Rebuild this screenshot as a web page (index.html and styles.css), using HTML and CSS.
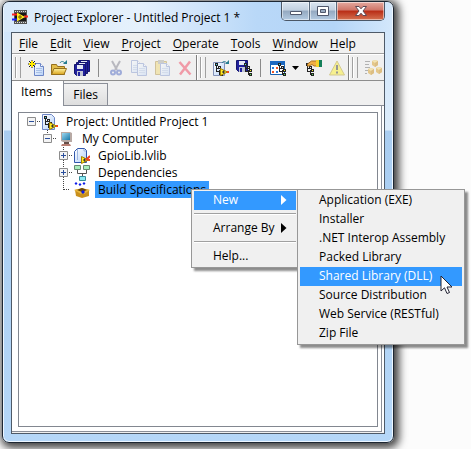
FILE: index.html
```html
<!DOCTYPE html>
<html lang="en">
<head>
<meta charset="utf-8">
<meta name="viewport" content="width=device-width">
<title>Project Explorer - Untitled Project 1 *</title>
<link rel="stylesheet" href="styles.css">
</head>
<body>
<svg class="defs" aria-hidden="true">
  <defs>
    <linearGradient id="paper" x2="1" y2="1"><stop stop-color="#fff"/><stop offset="1" stop-color="#b4d0f8"/></linearGradient>
    <linearGradient id="gold" x2="0" y2="1"><stop stop-color="#fff3a0"/><stop offset="1" stop-color="#d9a21c"/></linearGradient>
    <linearGradient id="screen" x2="1" y2="1"><stop stop-color="#9ed8f0"/><stop offset="1" stop-color="#1878a8"/></linearGradient>
    <g id="nodes" shape-rendering="crispEdges">
      <path d="M1 3h1v6H1zM2 5h1v1H2zM2 8h3v1H2zM4 7h1v5H4z" fill="#222"/>
      <path d="M0 0h3v3H0zM3 3h3v3H3zM5 6h3v3H5zM5 10h3v3H5z" fill="#222"/>
      <path d="M1 1h1v1H1z" fill="#45d4e8"/><path d="M4 4h1v1H4z" fill="#ddd"/>
      <path d="M6 7h1v1H6z" fill="#f2e52c"/><path d="M6 11h1v1H6z" fill="#58d858"/>
    </g>
    <g id="sheet">
      <path d="M.5.5h6l3 3v9h-9z" fill="url(#paper)" stroke="#6d86c6"/>
      <path d="M6.500.5v3h3" fill="#fff" stroke="#6d86c6"/>
      <path d="M2 5.500h6M2 7.500h6M2 9.500h6" stroke="#a9c0e6"/>
    </g>
    <g id="disk">
      <path d="M.5.5h11v11h-9l-2-2z" fill="#20209c" stroke="#14146c"/>
      <path d="M3 1h6v4H3z" fill="#e4e8f4"/><path d="M3 7h6v5H3z" fill="#bfc4d4"/><path d="M4 8h2v4H4z" fill="#20209c"/>
    </g>
    <g id="badge"><path d="M.5.5l7 3.500-7 3.500z" fill="#ffeb25" stroke="#a78300"/><path d="M2 4h3M3.500 2.500v3" stroke="#333"/><path d="M7 4h2" stroke="#f34b1b" stroke-width="2"/></g>
    <g id="cube"><path d="M3 0l3 1v4L3 7 0 5V1z" fill="#dfb75f"/><path d="M3 0l3 1-3 2-3-2z" fill="#f5df9a"/><path d="M3 3v4l3-2V1z" fill="#d4a956"/></g>
  </defs>
</svg>

<main class="window">
  <header class="titlebar">
    <svg class="app-icon" width="16" height="16" viewBox="0 0 16 16" aria-hidden="true">
      <path d="M2 1h13v14H2z" fill="#555"/><path d="M3 2.500h12M3 13.500h12" stroke="#ddd" stroke-dasharray="1 1"/>
      <path d="M3 4h11v8H3z" fill="#161616"/>
      <path d="M0 5.500h5" stroke="#f22" stroke-width="2"/><path d="M0 10.500h5" stroke="#22f" stroke-width="2"/><path d="M12 7.500h4" stroke="#f22" stroke-width="2"/>
      <path d="M5 3.500l8 4.500-8 4.500z" fill="#ffec22"/><path d="M6 8h4M8 6v4" stroke="#715700"/>
    </svg>
    <h1>Project Explorer - Untitled Project 1 *</h1>
    <div class="caption">
      <button type="button" class="cap min" aria-label="Minimize"><svg width="14" height="12" viewBox="0 0 14 12"><path d="M1.500 6.500h11v3h-11z" fill="#fff" stroke="#50586c"/></svg></button>
      <button type="button" class="cap max" aria-label="Maximize"><svg width="14" height="12" viewBox="0 0 14 12"><path d="M1.500 1.500h11v9h-11z" fill="#fff" stroke="#50586c"/><path d="M4.500 4.500h5v3h-5z" fill="#99abc0" stroke="#50586c"/></svg></button>
      <button type="button" class="cap close" aria-label="Close"><svg width="14" height="12" viewBox="0 0 14 12"><path d="M1.500 1.500h3.500L7 3.800l2-2.300h3.500L9 6l3.500 4.500H9L7 8.200l-2 2.300H1.500L5 6z" fill="#fff" stroke="#5e4a55"/></svg></button>
    </div>
  </header>

  <div class="client">
    <nav class="menubar" aria-label="Main menu">
      <button type="button"><u>F</u>ile</button>
      <button type="button"><u>E</u>dit</button>
      <button type="button"><u>V</u>iew</button>
      <button type="button"><u>P</u>roject</button>
      <button type="button"><u>O</u>perate</button>
      <button type="button"><u>T</u>ools</button>
      <button type="button"><u>W</u>indow</button>
      <button type="button"><u>H</u>elp</button>
    </nav>

    <div class="toolbar" role="toolbar" aria-label="Project tools">
      <div class="band">
        <span class="grip"></span>
        <button type="button" aria-label="New"><svg width="16" height="16" viewBox="0 0 16 16"><use href="#sheet" x="6" y="3"/><path d="M4 0v8M0 4h8M1 1l6 6M7 1L1 7" stroke="#222"/><path d="M4 1v6M1 4h6" stroke="#ffe900" stroke-width="2"/></svg></button>
        <button type="button" aria-label="Open"><svg width="16" height="16" viewBox="0 0 16 16"><path d="M.5 14.500v-10h5l1 2h7v8z" fill="#e3bd4a" stroke="#96701c"/><path d="M3 8.500h12.500l-2.500 6H.5z" fill="url(#gold)" stroke="#96701c"/><path d="M9 3c1-2 3-2 5 0" fill="none" stroke="#257d91"/><path d="M12 4h4V0z" fill="#257d91"/></svg></button>
        <button type="button" aria-label="Save all"><svg width="16" height="16" viewBox="0 0 16 16"><use href="#disk" x="4" y="0"/><use href="#disk" x="2" y="2"/><use href="#disk" x="0" y="4"/></svg></button>
        <span class="divider"></span>
        <button type="button" class="off" aria-label="Cut" disabled><svg width="16" height="16" viewBox="0 0 16 16"><path d="M4 1l5 9M12 1l-5 9" stroke="#667" stroke-width="2"/><circle cx="5" cy="12.500" r="2" fill="none" stroke="#2848b8" stroke-width="2"/><circle cx="11" cy="12.500" r="2" fill="none" stroke="#2848b8" stroke-width="2"/></svg></button>
        <button type="button" class="off" aria-label="Copy" disabled><svg width="16" height="16" viewBox="0 0 16 16"><use href="#sheet"/><use href="#sheet" x="6" y="3"/></svg></button>
        <button type="button" class="off" aria-label="Paste" disabled><svg width="16" height="16" viewBox="0 0 16 16"><path d="M1.500 1.500h11v13h-11z" fill="#f1d45a" stroke="#a5801f"/><path d="M4 0h6v4H4z" fill="#9a9a90"/><use href="#sheet" x="6" y="3"/></svg></button>
        <button type="button" class="off" aria-label="Delete" disabled><svg width="16" height="16" viewBox="0 0 16 16"><path d="M2.500 2l11 12.500M13 1.500L3 14.500" stroke="#f01c3c" stroke-width="2.500"/></svg></button>
      </div>
      <div class="band">
        <span class="grip"></span>
        <button type="button" aria-label="Open project"><svg width="16" height="16" viewBox="0 0 16 16"><path d="M.5 2.500h11v13H.5z" fill="url(#paper)" stroke="#8291b8"/><use href="#nodes" x="2" y="3"/><path d="M9 3c1-2 3-2 5 0" fill="none" stroke="#257d91"/><path d="M12 4h4V0z" fill="#257d91"/><use href="#badge" x="7" y="8"/></svg></button>
        <button type="button" aria-label="Save project"><svg width="16" height="16" viewBox="0 0 16 16"><use href="#disk"/><use href="#nodes" x="8" y="3"/></svg></button>
        <span class="divider"></span>
        <button type="button" class="view" aria-label="View options"><svg width="16" height="16" viewBox="0 0 16 16"><path d="M.5 1.500h14v13H.5z" fill="#fff" stroke="#1760ae"/><path d="M0 1h15v4H0z" fill="#1c68c0"/><path d="M2 7h2v2H2zM6 11h2v2H6z" fill="#2d7ddb"/><path d="M6 7h2v2H6zM2 11h2v2H2z" fill="#ef5525"/><use href="#nodes" x="8" y="3"/></svg><svg class="drop" width="7" height="4" viewBox="0 0 7 4"><path d="M0 0h7L3.500 4z"/></svg></button>
        <button type="button" aria-label="Project properties"><svg width="16" height="16" viewBox="0 0 16 16"><use href="#nodes" y="3"/><path d="M1.500 4l4-3h5v5H8L6 4.500 3 6H1.500z" fill="#efae47" stroke="#a9701f"/><path d="M10 0h3v7h-3z" fill="#f3d12d"/><path d="M13 0h3v7h-3z" fill="#15805a"/></svg></button>
        <button type="button" class="off" aria-label="Resolve conflicts" disabled><svg width="16" height="16" viewBox="0 0 16 16"><path d="M8 1l7.500 14H.5z" fill="#fff000" stroke="#ab9100"/><path d="M8 5v5M8 11.500v2" stroke="#111" stroke-width="2"/></svg></button>
      </div>
      <div class="band last">
        <span class="grip"></span>
        <button type="button" class="faded" aria-label="Build" disabled><svg width="17" height="16" viewBox="0 0 17 16"><path d="M0 1.500h5M0 4.500h4M0 7.500h5M0 10.500h3M0 13.500h2" stroke="#999"/><use href="#cube" x="7"/><use href="#cube" x="3" y="8"/><use href="#cube" x="11" y="7"/></svg></button>
      </div>
    </div>

    <div class="tabs" role="tablist">
      <button type="button" role="tab" aria-selected="true" class="tab active">Items</button>
      <button type="button" role="tab" aria-selected="false" class="tab">Files</button>
      <span class="rest"></span>
    </div>

    <section class="panel">
      <ul class="tree" role="tree">
        <li role="treeitem">
          <div class="row"><svg class="branch" width="15" height="17" viewBox="0 0 15 17"><path class="dots" d="M10 8.500h3"/><path class="box" d="M.5 4.500h8v8h-8z"/><path class="sign" d="M2 8.500h5"/></svg><svg class="ico" width="16" height="16" viewBox="0 0 16 16"><path d="M.5.5h9l3 3v12H.5z" fill="url(#paper)" stroke="#6d86c6"/><use href="#nodes" x="2" y="2"/><use href="#badge" x="7" y="8"/></svg><span class="label">Project: Untitled Project 1</span></div>
          <ul>
            <li role="treeitem">
              <div class="row"><svg class="branch" width="15" height="17" viewBox="0 0 15 17"><path class="dots" d="M4.500 0v4M10 8.500h3"/><path class="box" d="M.5 4.500h8v8h-8z"/><path class="sign" d="M2 8.500h5"/></svg><svg class="ico" width="16" height="16" viewBox="0 0 16 16"><path d="M3 1h9l2 1v9H5l-2-1z" fill="#b7a9a4"/><path d="M4 2h8v7H4z" fill="url(#screen)"/><path d="M6 11h5v2H6z" fill="#654f49"/><path d="M4 13h8l1 2H3z" fill="#b87e72"/></svg><span class="label">My Computer</span></div>
              <ul>
                <li role="treeitem"><div class="row"><svg class="branch" width="15" height="17" viewBox="0 0 15 17"><path class="dots" d="M4.500 0v4M4.500 13v4M10 8.500h3"/><path class="box" d="M.5 4.500h8v8h-8z"/><path class="sign" d="M2 8.500h5M4.500 6v5"/></svg><svg class="ico" width="16" height="16" viewBox="0 0 16 16"><path d="M3.500.5h7l2 2v12H.5V3.500z" fill="url(#paper)" stroke="#3157ac"/><path d="M3.500 1v11M10 1v2h2" fill="none" stroke="#9db5e0"/><use href="#badge" x="7" y="8"/><path d="M12 12l4-4" stroke="#ef3d20" stroke-width="2"/></svg><span class="label">GpioLib.lvlib</span></div></li>
                <li role="treeitem"><div class="row"><svg class="branch" width="15" height="17" viewBox="0 0 15 17"><path class="dots" d="M4.500 0v4M4.500 13v4M10 8.500h3"/><path class="box" d="M.5 4.500h8v8h-8z"/><path class="sign" d="M2 8.500h5M4.500 6v5"/></svg><svg class="ico" width="16" height="16" viewBox="0 0 16 16"><path d="M3.500 5v3.500h9V5M8.500 8v3" fill="none" stroke="#555"/><path d="M.5.5h6v4h-6zM9.500.5h6v4h-6z" fill="#a9edbb" stroke="#668a70"/><path d="M5.500 11.500h6v4h-6z" fill="#8ceaf2" stroke="#378d9b"/></svg><span class="label">Dependencies</span></div></li>
                <li role="treeitem" aria-selected="true"><div class="row"><svg class="branch" width="15" height="17" viewBox="0 0 15 17"><path class="dots" d="M4.500 0v9M5 8.500h6"/></svg><svg class="ico" width="16" height="16" viewBox="0 0 16 16"><path d="M1 8l7-2 7 2v6l-7 2-6-2z" fill="#c9901d"/><path d="M0 8l3-1 6 3-2 2zM16 8l-3-1-5 3 2 2z" fill="#e9b83e"/><path d="M3 8l5-2 5 2-5 2z" fill="#68460b"/><path d="M9 8l2 2-2 2-2-2zM2 0l1.500 1.500L2 3 .5 1.500zM6 1l1.500 1.500L6 4 4.500 2.500zM10 0l1.500 1.500L10 3 8.500 1.500z" fill="#0b19e8"/></svg><span class="label selected">Build Specifications</span></div></li>
              </ul>
            </li>
          </ul>
        </li>
      </ul>
    </section>
  </div>
</main>

<div class="popup context" role="menu">
  <button type="button" role="menuitem" class="on">New<svg width="6" height="10" viewBox="0 0 6 10"><path d="M0 0l5.500 5L0 10z"/></svg></button>
  <hr>
  <button type="button" role="menuitem">Arrange By<svg width="6" height="10" viewBox="0 0 6 10"><path d="M0 0l5.500 5L0 10z"/></svg></button>
  <hr>
  <button type="button" role="menuitem">Help...</button>
</div>

<div class="popup submenu" role="menu">
  <button type="button" role="menuitem">Application (EXE)</button>
  <button type="button" role="menuitem">Installer</button>
  <button type="button" role="menuitem">.NET Interop Assembly</button>
  <button type="button" role="menuitem">Packed Library</button>
  <button type="button" role="menuitem" class="on">Shared Library (DLL)</button>
  <button type="button" role="menuitem">Source Distribution</button>
  <button type="button" role="menuitem">Web Service (RESTful)</button>
  <button type="button" role="menuitem">Zip File</button>
</div>

<svg class="pointer" width="13" height="20" viewBox="0 0 13 20" aria-hidden="true"><path d="M1 1v15l3.500-3.200L7 18.500l2.500-1-2.500-5.500h5z" fill="#fff" stroke="#223" stroke-linejoin="round"/></svg>
</body>
</html>
```
FILE: styles.css
```css
* { box-sizing: border-box; }

body {
  display: flex;
  min-height: 100vh;
  margin: 0;
  padding: 1px 77px 6px 2px;
  background: #fcfcfc;
  color: #000;
  font: 12px/17px "Open Sans", "Noto Sans", sans-serif;
  overflow: hidden;
}

button {
  margin: 0;
  padding: 0;
  border: 0;
  background: none;
  color: inherit;
  font: inherit;
}

svg { display: block; flex: none; }
.defs { position: absolute; width: 0; height: 0; }

/* Window frame */
.window {
  flex: 1;
  display: flex;
  flex-direction: column;
  min-width: 0;
  padding: 0 8px 8px;
  border: 1px solid #1d2733;
  border-radius: 7px;
  background: linear-gradient(#cfe5fb 0, #dcecfb 128px, #a9cdf1 129px, #b5d7f8);
  box-shadow: inset 0 0 0 1px #eef7ff, 2px 2px 9px 3px rgba(0, 0, 0, .75);
}

.titlebar {
  display: flex;
  align-items: center;
  height: 30px;
  margin: 0 -7px;
  padding: 0 7px 0 8px;
  background: linear-gradient(90deg, #d8e9fa, #e6f1fc 35%, #b9d8f8 65%, #b4d5f7 85%, #d3e7fb);
  border-radius: 6px 6px 0 0;
}

.app-icon { margin-right: 6px; }

h1 {
  flex: 1;
  margin: 0;
  font-size: 12px;
  font-weight: 400;
  white-space: nowrap;
}

.caption {
  display: flex;
  align-self: flex-start;
  height: 19px;
  border: 1px solid #4b5766;
  border-top: 0;
  border-radius: 0 0 5px 5px;
  overflow: hidden;
}

.cap {
  display: grid;
  place-items: center;
  width: 28px;
  border-right: 1px solid #5b6b7e;
  background: linear-gradient(#dbe6f1, #c2d0df 45%, #94a9c0 50%, #b4cbe2);
  box-shadow: inset 0 0 0 1px rgba(255, 255, 255, .5);
}

.max { width: 27px; }

.close {
  width: 47px;
  border: 0;
  background: linear-gradient(#e5aaa0, #cf7568 45%, #b92c15 50%, #d57352);
}

.client {
  flex: 1;
  display: flex;
  flex-direction: column;
  border: 1px solid #4e5a68;
  background: #f0f0f0;
}

/* Menu bar and toolbar */
.menubar {
  display: flex;
  gap: 12px;
  height: 21px;
  padding: 0 7px;
  border-bottom: 1px solid #a0a0a0;
}

.menubar u { text-underline-offset: 2px; }

.toolbar {
  display: flex;
  height: 27px;
  border-bottom: 1px solid #8d8d8d;
  border-top: 1px solid #fff;
}

.band {
  display: flex;
  align-items: center;
  padding-left: 3px;
  border-right: 1px solid #808080;
  box-shadow: inset 1px 0 #fff;
}

.band.last { flex: 1; border: 0; }

.band button {
  display: flex;
  align-items: center;
  width: 23px;
  height: 22px;
  padding-left: 4px;
}

.band .view { width: 36px; }
.drop { margin-left: 6px; }
.off { opacity: .4; }
.faded { opacity: .7; }

.grip {
  width: 6px;
  height: 21px;
  margin-right: 3px;
  border: solid #a0a0a0;
  border-width: 0 1px;
  box-shadow: inset 1px 0 #fff;
}

.divider {
  width: 1px;
  height: 18px;
  margin: 0 5px;
  background: #8a8a8a;
}

/* Tabs and project tree */
.tabs {
  display: flex;
  align-items: flex-end;
  height: 25px;
}

.tab {
  height: 23px;
  padding: 0 9px;
  border: 1px solid #8b8f98;
  border-left: 0;
  background: linear-gradient(#f2f2f2, #dedede);
}

.tab.active {
  align-self: stretch;
  height: auto;
  padding: 0 11px 4px 9px;
  border-width: 0 1px 0 0;
  background: #fff;
}

.rest { flex: 1; border-bottom: 1px solid #8b8f98; }

.panel {
  flex: 1;
  display: flex;
  margin-right: 2px;
  margin-bottom: 1px;
  padding: 6px 3px 4px 6px;
  border: solid #8b8f98;
  border-width: 0 1px 1px 0;
  background: #fff;
  box-shadow: 2px 0 #fff;
}

.tree {
  flex: 1;
  margin: 0;
  padding: 0 0 0 8px;
  border: 1px solid #828790;
}

.tree ul { margin: 0; padding-left: 16px; }
.tree li { list-style: none; }

.row { display: flex; align-items: center; height: 17px; }
.ico { margin-right: 5px; }
.label { padding: 0 3px; white-space: nowrap; }
.selected { background: #3399ff; }

.dots { fill: none; stroke: #444; stroke-dasharray: 1 1; }
.box { fill: #f4f4f4; stroke: #8c8c8c; }
.sign { fill: none; stroke: #2b4f9c; }

/* Popup menus */
.popup {
  position: absolute;
  padding: 1px 2px;
  border: 1px solid #979797;
  background: #f0f0f0;
  box-shadow: 3px 3px 2px rgba(0, 0, 0, .45);
}

.context { left: 191px; top: 189px; width: 108px; }
.submenu { left: 297px; top: 189px; width: 168px; }

.popup button {
  display: flex;
  align-items: center;
  justify-content: space-between;
  width: 100%;
  height: 19px;
  padding: 0 9px 2px 19px;
  text-align: left;
  white-space: nowrap;
}

.popup .on { background: #3399ff; color: #fff; }
.popup path { fill: currentColor; }

.popup hr {
  height: 2px;
  margin: 3px 0 4px;
  border: solid #a0a0a0;
  border-width: 1px 0 0;
  background: #fff;
}

.pointer { position: absolute; left: 440px; top: 275px; }
```
